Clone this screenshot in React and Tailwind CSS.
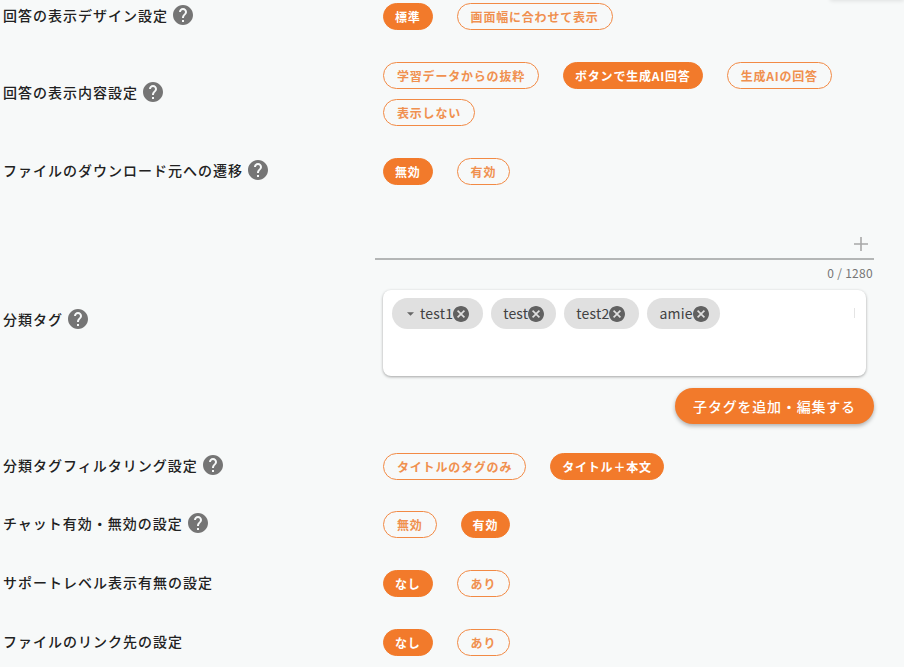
const HELP = "M12 2C6.48 2 2 6.48 2 12s4.48 10 10 10 10-4.48 10-10S17.52 2 12 2zm1 17h-2v-2h2v2zm2.07-7.75l-.9.92C13.45 12.9 13 13.5 13 15h-2v-.5c0-1.1.45-2.1 1.17-2.83l1.24-1.26c.37-.36.59-.86.59-1.41 0-1.1-.9-2-2-2s-2 .9-2 2H8c0-2.21 1.79-4 4-4s4 1.79 4 4c0 .88-.36 1.68-.93 2.25z";
const CANCEL = "M12 2C6.47 2 2 6.47 2 12s4.47 10 10 10 10-4.47 10-10S17.53 2 12 2zm5 13.59L15.59 17 12 13.41 8.41 17 7 15.59 10.59 12 7 8.41 8.41 7 12 10.59 15.59 7 17 8.41 13.41 12 17 15.59z";

function Help() {
  return (
    <svg viewBox="0 0 24 24" className="w-6 h-6 ml-[3px] shrink-0" fill="#757575">
      <path d={HELP} />
    </svg>
  );
}

function Label({ text, help }) {
  return (
    <div className="flex items-center pl-[3px] text-[14px] leading-6 font-medium tracking-[1px] text-[#212121]">
      <span>{text}</span>
      {help && <Help />}
    </div>
  );
}

function Chip({ text, on }) {
  return (
    <div
      className={
        on
          ? "h-[27px] px-[11px] flex items-center rounded-full border border-[#f27a2b] bg-[#f27a2b] text-white text-[12px] font-bold tracking-[0.8px] whitespace-nowrap"
          : "h-[27px] px-[13px] flex items-center rounded-full border border-[#f28a45] text-[#f0904f] text-[12px] font-bold tracking-[0.8px] whitespace-nowrap"
      }
    >
      {text}
    </div>
  );
}

function Row({ label, help, chips, on, className }) {
  return (
    <div className={"flex items-center " + (className || "")}>
      <div className="w-[383px] shrink-0 -mt-1">
        <Label text={label} help={help} />
      </div>
      <div className="flex flex-wrap gap-x-6 gap-y-2.5 w-[491px]">
        {chips.map((c, i) => (
          <Chip key={c} text={c} on={i === on} />
        ))}
      </div>
    </div>
  );
}

function Tag({ text, arrow, className }) {
  return (
    <div className={"h-[31px] rounded-full bg-[#e0e0e0] flex items-center text-[14px] tracking-[0.2px] text-[#424242] " + className}>
      {arrow && (
        <svg viewBox="0 0 8 4" className="w-[7px] h-[4px] mr-[6px]" fill="#666">
          <path d="M0 0h8L4 4z" />
        </svg>
      )}
      <span>{text}</span>
      <svg viewBox="2 2 20 20" className="w-4 h-4 shrink-0" fill="#616161">
        <path d={CANCEL} />
      </svg>
    </div>
  );
}

export default function App() {
  return (
    <div className="h-[667px] overflow-hidden bg-white" style={{ fontFamily: '"Noto Sans CJK JP", "Noto Sans", sans-serif' }}>
      <div className="relative w-[904px] h-full bg-[#f7f9f9] pt-[3px] overflow-hidden">
        <div className="absolute right-0 -top-5 w-[74px] h-5 bg-[#f7f9f9] shadow-[0_1px_4px_rgba(0,0,0,0.1)]" />
        <Row label="回答の表示デザイン設定" help chips={["標準", "画面幅に合わせて表示"]} on={0} />
        <Row className="mt-8" label="回答の表示内容設定" help chips={["学習データからの抜粋", "ボタンで生成AI回答", "生成AIの回答", "表示しない"]} on={1} />
        <Row className="mt-8" label="ファイルのダウンロード元への遷移" help chips={["無効", "有効"]} on={0} />

        <div className="flex items-start mt-[45px]">
          <div className="w-[375px] shrink-0 pt-[77px]">
            <Label text="分類タグ" help />
          </div>
          <div className="w-[499px]">
            <div className="h-[30px] border-b-2 border-[#b4b6b6] flex items-center justify-end pr-[6px]">
              <svg viewBox="0 0 14 14" className="w-[14px] h-[14px]" stroke="#a8a8a8" strokeWidth="1.6" fill="none">
                <path d="M7 0v14M0 7h14" />
              </svg>
            </div>
            <div className="mt-1 h-[18px] text-right text-[12px] leading-[18px] tracking-[0.3px] text-[#757575] pr-px">0 / 1280</div>
            <div className="relative ml-2 mt-2 w-[483px] h-[86px] rounded-lg bg-white shadow-[0_1px_3px_rgba(0,0,0,0.35)] px-[9px] pt-2">
              <div className="flex gap-2">
                <Tag text="test1" arrow className="pl-[15px] pr-[14px]" />
                <Tag text="test" className="pl-[12px] pr-[12px]" />
                <Tag text="test2" className="pl-[12px] pr-[14px]" />
                <Tag text="amie" className="pl-[12px] pr-[11px]" />
              </div>
              <div className="absolute left-[471px] top-[18px] w-px h-[10px] bg-[#e4e4e4]" />
            </div>
            <div className="flex justify-end mt-3">
              <div className="w-[199px] h-9 rounded-full bg-[#f27a2b] text-white text-[14px] font-medium tracking-[0.8px] flex items-center justify-center shadow-[0_2px_4px_rgba(0,0,0,0.3)]">
                子タグを追加・編集する
              </div>
            </div>
          </div>
        </div>

        <Row className="mt-[29px]" label="分類タグフィルタリング設定" help chips={["タイトルのタグのみ", "タイトル＋本文"]} on={1} />
        <Row className="mt-[31px]" label="チャット有効・無効の設定" help chips={["無効", "有効"]} on={1} />
        <Row className="mt-[32px]" label="サポートレベル表示有無の設定" chips={["なし", "あり"]} on={0} />
        <Row className="mt-[32px]" label="ファイルのリンク先の設定" chips={["なし", "あり"]} on={0} />
      </div>
    </div>
  );
}
